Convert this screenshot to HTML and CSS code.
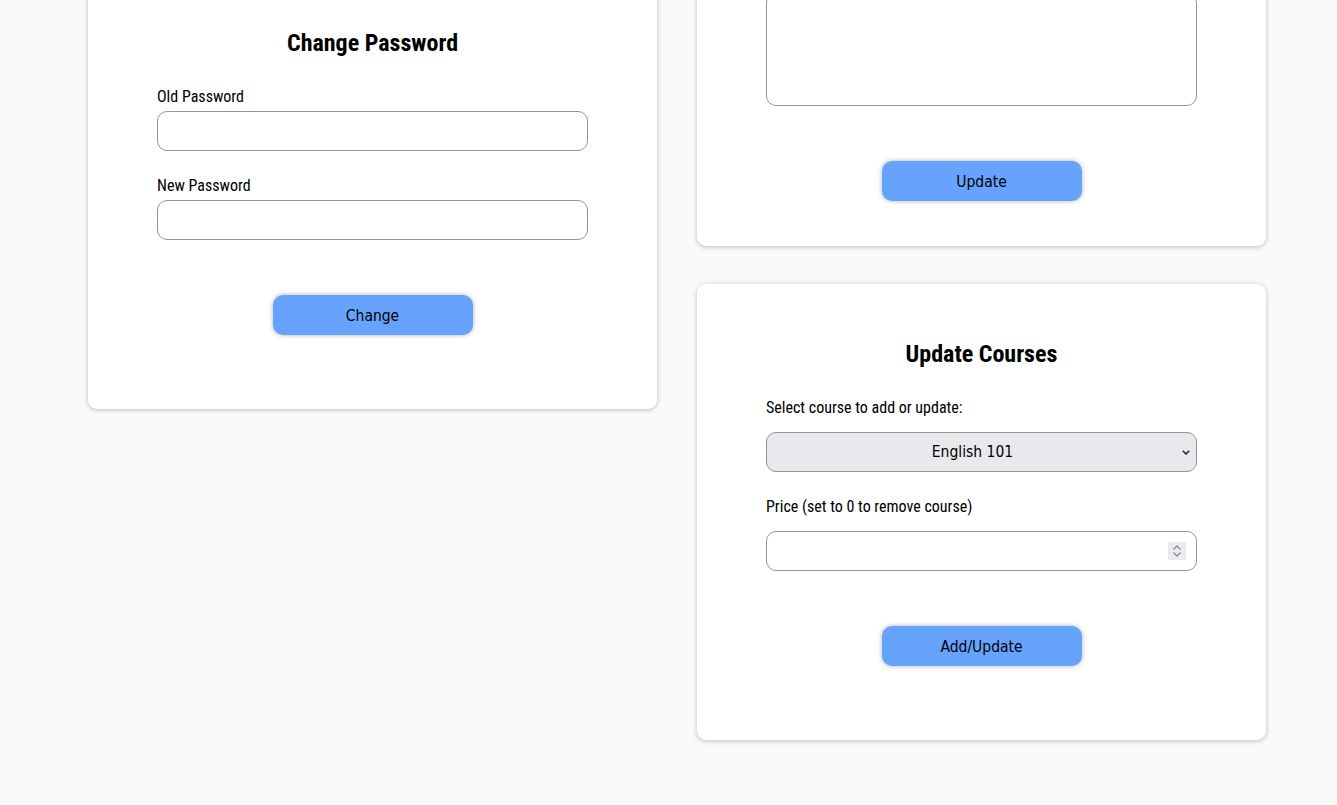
FILE: index.html
```html
<!DOCTYPE html>
<html lang="en">
<head>
<meta charset="utf-8">
<title>Settings</title>
<link rel="stylesheet" href="styles.css">
</head>
<body>
<div class="page">
  <div class="col">
    <div class="card">
      <h2 class="title">Change Password</h2>
      <form class="form">
        <label class="label" for="old">Old Password</label>
        <input class="field" id="old" type="password">
        <label class="label gap" for="new">New Password</label>
        <input class="field" id="new" type="password">
        <div class="actions"><button type="button" class="btn">Change</button></div>
      </form>
    </div>
  </div>
  <div class="col">
    <div class="card card-short">
      <textarea class="area"></textarea>
      <div class="actions"><button type="button" class="btn">Update</button></div>
    </div>
    <div class="card">
      <h2 class="title">Update Courses</h2>
      <form class="form">
        <label class="label wide" for="course">Select course to add or update:</label>
        <select class="field select" id="course">
          <option>English 101</option>
        </select>
        <label class="label gap wide" for="price">Price (set to 0 to remove course)</label>
        <div class="num-wrap">
          <input class="field" id="price" type="number">
          <span class="spin" aria-hidden="true">
            <svg width="10" height="14" viewBox="0 0 10 14"><path d="M1.5 5.5 L5 2 L8.5 5.5 M1.5 8.5 L5 12 L8.5 8.5" fill="none" stroke="#8a8a8a" stroke-width="1.3"/></svg>
          </span>
        </div>
        <div class="actions"><button type="button" class="btn">Add/Update</button></div>
      </form>
    </div>
  </div>
</div>
</body>
</html>
```
FILE: styles.css
```css
html, body {
  margin: 0;
  padding: 0;
  background: #fafafa;
}
body {
  font-family: Roboto, "Noto Sans", sans-serif;
  font-stretch: condensed;
  color: #000;
  height: 805px;
  overflow: hidden;
}
.page {
  display: flex;
  align-items: flex-start;
  gap: 40px;
  padding-left: 88px;
  margin-top: -27px;
}
.col {
  width: 569px;
  display: flex;
  flex-direction: column;
  gap: 38px;
}
.card {
  background: #fff;
  border-radius: 9px;
  box-shadow: 0 1px 5px rgba(0, 0, 0, 0.25);
  padding: 55px 69px 74px;
}
.card-short {
  padding-top: 20px;
  padding-bottom: 45px;
}
.title {
  margin: 0 0 28px;
  font-size: 24px;
  line-height: 30px;
  font-weight: 700;
  text-align: center;
}
.form {
  display: flex;
  flex-direction: column;
}
.label {
  display: block;
  font-size: 16px;
  line-height: 20px;
  padding-top: 1px;
  margin-bottom: 4px;
}
.label.wide {
  margin-bottom: 14px;
}
.label.gap {
  margin-top: 24px;
}
.field {
  box-sizing: border-box;
  width: 100%;
  height: 40px;
  border: 1px solid #959595;
  border-radius: 10px;
  background: #fff;
  font-family: "DejaVu Sans", sans-serif;
  font-stretch: condensed;
  font-size: 15.5px;
  padding: 0 10px;
  margin: 0;
  display: block;
}
.field[type="number"] {
  -moz-appearance: textfield;
}
.field[type="number"]::-webkit-inner-spin-button,
.field[type="number"]::-webkit-outer-spin-button {
  -webkit-appearance: none;
  margin: 0;
}
.select {
  -webkit-appearance: none;
  appearance: none;
  background-color: #e9e9ed;
  background-image: url("data:image/svg+xml,%3Csvg xmlns='http://www.w3.org/2000/svg' width='8' height='5' viewBox='0 0 8 5'%3E%3Cpath d='M0.8 0.8 L4 4 L7.2 0.8' fill='none' stroke='%23222' stroke-width='1.5'/%3E%3C/svg%3E");
  background-repeat: no-repeat;
  background-position: right 6px center;
  text-align: center;
  text-align-last: center;
  padding: 0 28px 0 10px;
  color: #000;
}
.num-wrap {
  position: relative;
}
.spin {
  position: absolute;
  right: 11px;
  top: 11px;
  width: 18px;
  height: 18px;
  background: #ebebef;
  display: flex;
  align-items: center;
  justify-content: center;
}
.spin svg {
  display: block;
}
.area {
  display: block;
  box-sizing: border-box;
  width: 100%;
  height: 113px;
  border: 1px solid #959595;
  border-radius: 10px;
  resize: none;
  margin: 0;
}
.actions {
  display: flex;
  justify-content: center;
  margin-top: 55px;
}
.btn {
  width: 200px;
  height: 40px;
  border: none;
  border-radius: 10px;
  background: #66a3ff;
  box-shadow: 0 0 5px rgba(0, 0, 0, 0.3);
  font-family: "DejaVu Sans", sans-serif;
  font-stretch: condensed;
  font-size: 15.5px;
  color: #000;
  padding: 2px 0 0;
  cursor: pointer;
}
```
